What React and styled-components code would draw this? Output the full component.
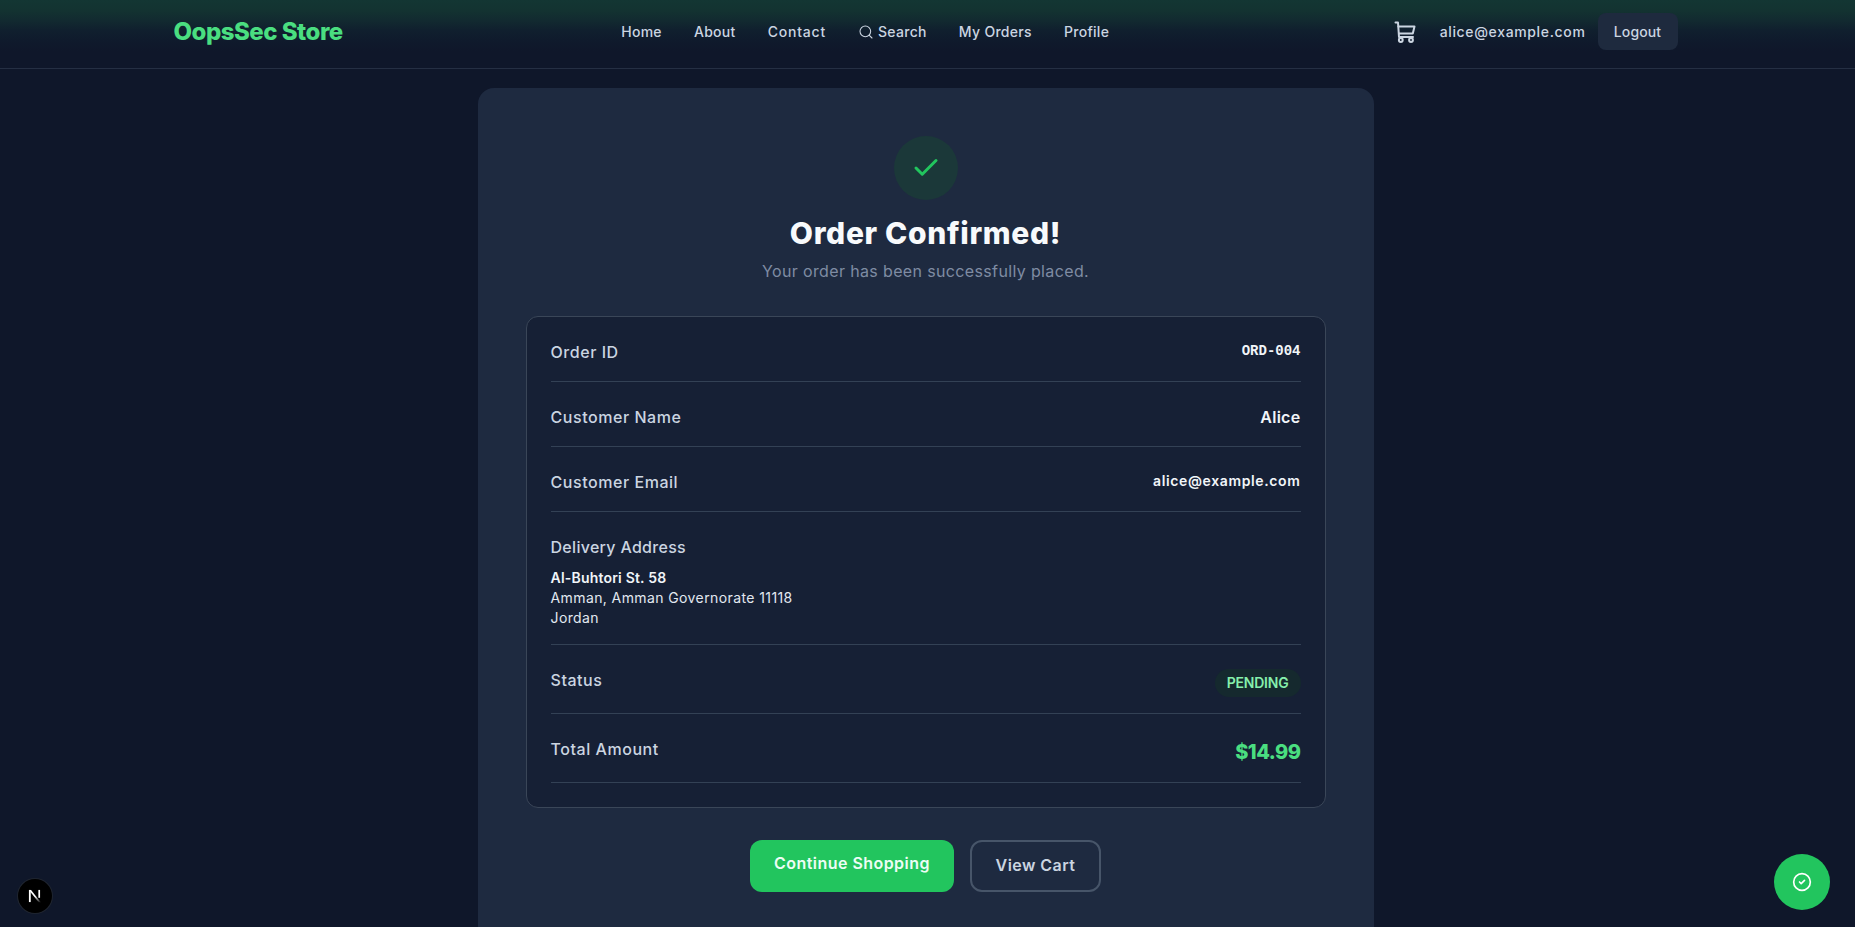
import React from 'react'
import styled, { createGlobalStyle } from 'styled-components'
import { Search, CircleCheck, Check } from 'lucide-react'

const GlobalStyle = createGlobalStyle`
    html, body {
        margin: 0;
        height: 100%;
        overflow: hidden;
        background: #0f172a;
        font-family: "Inter", "Noto Sans", sans-serif;
    }
    * { box-sizing: border-box; }
`

const Page = styled.div`
    height: 927px;
    overflow: hidden;
    background: #0f172a;
`

const Header = styled.header`
    height: 69px;
    border-bottom: 1px solid #252f43;
    background: linear-gradient(180deg, #133633 0%, #133331 15%, #122a30 30%, #101f2e 45%, #0f1a2c 60%, #0f172a 75%);
`

const HeaderInner = styled.div`
    width: 1536px;
    margin: 0 auto;
    padding: 13px 17px 0 15px;
    display: flex;
    justify-content: space-between;
    align-items: center;
    transform: translateX(-1px);
`

const Logo = styled.a`
    font-size: 24px;
    font-weight: 800;
    line-height: 37px;
    color: #4ade80;
    letter-spacing: -0.5px;
`

const Nav = styled.nav`
    display: flex;
    align-items: center;
    gap: 32px;
    margin-left: -5px;
`

const NavLink = styled.a`
    display: flex;
    align-items: center;
    gap: 4px;
    font-size: 14px;
    font-weight: 500;
    line-height: 20px;
    color: #cbd5e1;
    letter-spacing: ${p => p.$spacing || 0.3}px;
`

const HeaderRight = styled.div`
    display: flex;
    align-items: center;
    justify-content: flex-end;
    gap: 12px;
`

const CartLink = styled.a`
    display: flex;
    color: #cbd5e1;
    margin-right: 11px;
`

const UserEmail = styled.span`
    font-size: 14px;
    font-weight: 500;
    color: #cbd5e1;
    letter-spacing: 0.65px;
`

const LogoutButton = styled.button`
    height: 37px;
    width: 80px;
    border: 0;
    border-radius: 8px;
    background: #1e2a3e;
    color: #cbd5e1;
    font: 500 14px "Inter", sans-serif;
    letter-spacing: 0.1px;
`

const Main = styled.main`
    display: flex;
    justify-content: center;
    padding: 19px 4px 0 0;
`

const Card = styled.section`
    width: 896px;
    height: 900px;
    padding: 48px;
    border-radius: 16px;
    background: #1e2a40;
`

const IconCircle = styled.div`
    width: 64px;
    height: 64px;
    margin: 0 auto 16px;
    border-radius: 50%;
    background: #1b3839;
    color: #22c55e;
    display: flex;
    align-items: center;
    justify-content: center;
`

const Title = styled.h1`
    margin: 0 0 10px;
    font-size: 30px;
    line-height: 34px;
    font-weight: 800;
    text-align: center;
    color: #f8fafc;
    letter-spacing: 0.66px;
`

const Subtitle = styled.p`
    margin: 0 0 34px;
    font-size: 16px;
    line-height: 22px;
    text-align: center;
    color: #7f8ca3;
    letter-spacing: 0.36px;
`

const DetailsBox = styled.div`
    width: 800px;
    padding: 24px;
    border: 1px solid #3a4658;
    border-radius: 12px;
    background: #162035;
    display: flex;
    flex-direction: column;
    gap: 24px;
`

const Row = styled.div`
    display: flex;
    justify-content: space-between;
    align-items: flex-start;
    padding-bottom: 16px;
    border-bottom: 1px solid #334155;
`

const AddressRow = styled.div`
    padding-bottom: 16px;
    border-bottom: 1px solid #334155;
`

const Label = styled.span`
    display: block;
    font-size: 16px;
    line-height: 22px;
    margin-bottom: 2px;
    font-weight: 500;
    color: #cbd5e1;
    letter-spacing: ${p => p.$spacing || 0.55}px;
`

const Value = styled.span`
    font-size: ${p => p.$size || 14}px;
    line-height: ${p => p.$line || 20}px;
    font-weight: 600;
    color: #f1f5f9;
    letter-spacing: ${p => p.$spacing || 0}px;
`

const MonoValue = styled.span`
    font-family: "Liberation Mono", monospace;
    font-size: 14px;
    line-height: 20px;
    font-weight: 700;
    color: #f1f5f9;
`

const Address = styled.div`
    margin-top: 10px;
    font-size: 14px;
    line-height: 20px;
    color: #e2e8f0;
    letter-spacing: 0.4px;
`

const Street = styled.div`
    font-weight: 600;
    color: #f1f5f9;
    letter-spacing: 0.2px;
`

const Badge = styled.span`
    padding: 4px 12px;
    font-size: 14px;
    line-height: 20px;
    font-weight: 600;
    border-radius: 999px;
    color: #86efac;
    background: #15292e;
    letter-spacing: -0.2px;
`

const Total = styled.span`
    font-size: 20px;
    line-height: 28px;
    font-weight: 800;
    color: #4ade80;
    letter-spacing: -0.5px;
`

const Actions = styled.div`
    margin-top: 32px;
    display: flex;
    justify-content: center;
    gap: 16px;
`

const PrimaryButton = styled.a`
    width: 204px;
    height: 52px;
    padding-top: 11px;
    border-radius: 12px;
    background: #22c55e;
    color: #ecfdf5;
    font-size: 16px;
    line-height: 24px;
    font-weight: 600;
    text-align: center;
    letter-spacing: 0.45px;
`

const SecondaryButton = styled.a`
    width: 131px;
    height: 52px;
    padding-top: 11px;
    border: 2px solid #475569;
    border-radius: 12px;
    color: #cbd5e1;
    font-size: 16px;
    line-height: 24px;
    font-weight: 600;
    text-align: center;
    letter-spacing: 0.45px;
`

const DevBadge = styled.div`
    position: fixed;
    left: 18px;
    bottom: 14px;
    width: 34px;
    height: 34px;
    border-radius: 50%;
    background: #000;
    box-shadow: 0 0 0 1px #1f2530;
    display: flex;
    align-items: center;
    justify-content: center;
`

const HelpButton = styled.button`
    position: fixed;
    right: 25px;
    bottom: 17px;
    width: 56px;
    height: 56px;
    border: 0;
    border-radius: 50%;
    background: #22c55e;
    color: #fff;
    display: flex;
    align-items: center;
    justify-content: center;
`

const CartIcon = () => (
    <svg width="24" height="24" viewBox="0 0 24 24" fill="none" stroke="currentColor" strokeWidth="2" strokeLinecap="round" strokeLinejoin="round">
        <path d="M2.5 2.5H5L6 17H20" />
        <path d="M5.4 6.5H21.5L19.8 13.5H6" />
        <circle cx="7.8" cy="20" r="1.9" />
        <circle cx="18" cy="20" r="1.9" />
    </svg>
)

const NextMark = () => (
    <svg width="18" height="18" viewBox="0 0 16 16">
        <defs>
            <linearGradient id="nextFade" x1="0" y1="0" x2="0" y2="1">
                <stop offset="0.5" stopColor="#fff" />
                <stop offset="1" stopColor="#fff" stopOpacity="0" />
            </linearGradient>
        </defs>
        <rect x="2.6" y="2.6" width="1.6" height="10.8" fill="#fff" />
        <polygon points="2.6,2.6 4.5,2.6 13.4,14 11.5,14" fill="url(#nextFade)" />
        <rect x="11" y="2.6" width="1.5" height="7" fill="#fff" />
    </svg>
)

const App = () => {
    return (
        <Page>
            <GlobalStyle />
            <Header>
                <HeaderInner>
                    <Logo>OopsSec Store</Logo>
                    <Nav>
                        <NavLink>Home</NavLink>
                        <NavLink>About</NavLink>
                        <NavLink $spacing={0.8}>Contact</NavLink>
                        <NavLink><Search size={16} strokeWidth={1.6} />Search</NavLink>
                        <NavLink>My Orders</NavLink>
                        <NavLink>Profile</NavLink>
                    </Nav>
                    <HeaderRight>
                        <CartLink><CartIcon /></CartLink>
                        <UserEmail>alice@example.com</UserEmail>
                        <LogoutButton>Logout</LogoutButton>
                    </HeaderRight>
                </HeaderInner>
            </Header>
            <Main>
                <Card>
                    <IconCircle><Check size={30} strokeWidth={2.4} /></IconCircle>
                    <Title>Order Confirmed!</Title>
                    <Subtitle>Your order has been successfully placed.</Subtitle>
                    <DetailsBox>
                        <Row>
                            <Label>Order ID</Label>
                            <MonoValue>ORD-004</MonoValue>
                        </Row>
                        <Row>
                            <Label>Customer Name</Label>
                            <Value $size={16} $line={22} $spacing={0.3}>Alice</Value>
                        </Row>
                        <Row>
                            <Label>Customer Email</Label>
                            <Value $spacing={0.63}>alice@example.com</Value>
                        </Row>
                        <AddressRow>
                            <Label $spacing={0.3}>Delivery Address</Label>
                            <Address>
                                <Street>Al-Buhtori St. 58</Street>
                                <div>Amman, Amman Governorate 11118</div>
                                <div>Jordan</div>
                            </Address>
                        </AddressRow>
                        <Row>
                            <Label>Status</Label>
                            <Badge>PENDING</Badge>
                        </Row>
                        <Row>
                            <Label>Total Amount</Label>
                            <Total>$14.99</Total>
                        </Row>
                    </DetailsBox>
                    <Actions>
                        <PrimaryButton>Continue Shopping</PrimaryButton>
                        <SecondaryButton>View Cart</SecondaryButton>
                    </Actions>
                </Card>
            </Main>
            <DevBadge><NextMark /></DevBadge>
            <HelpButton><CircleCheck size={20} strokeWidth={2} /></HelpButton>
        </Page>
    )
}

export default App
